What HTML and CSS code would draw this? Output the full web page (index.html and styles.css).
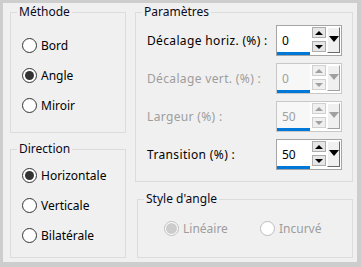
FILE: index.html
```html
<!DOCTYPE html>
<html lang="fr">
<head>
  <meta charset="UTF-8">
  <title>Angle</title>
  <link rel="stylesheet" href="styles.css">
</head>
<body>
  <div class="dialog">
    <div class="col-left">
      <div class="group methode">
        <span class="group-title">Méthode</span>
        <label class="radio-row"><span class="radio"></span>Bord</label>
        <label class="radio-row"><span class="radio checked"></span>Angle</label>
        <label class="radio-row"><span class="radio"></span>Miroir</label>
      </div>
      <div class="group direction">
        <span class="group-title">Direction</span>
        <label class="radio-row"><span class="radio checked"></span>Horizontale</label>
        <label class="radio-row"><span class="radio"></span>Verticale</label>
        <label class="radio-row"><span class="radio"></span>Bilatérale</label>
      </div>
    </div>

    <div class="col-right">
      <div class="group params">
        <span class="group-title">Paramètres</span>

        <div class="param-row">
          <span class="param-label">Décalage horiz. (%) :</span>
          <div class="spin">
            <div class="spin-field"><span>0</span></div>
            <div class="spin-btns">
              <span class="spin-btn"><span class="tri-up"></span></span>
              <span class="spin-btn"><span class="tri-down"></span></span>
            </div>
            <span class="drop-btn"><span class="tri-drop"></span></span>
          </div>
        </div>

        <div class="param-row disabled">
          <span class="param-label">Décalage vert. (%) :</span>
          <div class="spin">
            <div class="spin-field"><span>0</span></div>
            <div class="spin-btns">
              <span class="spin-btn"><span class="tri-up"></span></span>
              <span class="spin-btn"><span class="tri-down"></span></span>
            </div>
            <span class="drop-btn"><span class="tri-drop"></span></span>
          </div>
        </div>

        <div class="param-row disabled">
          <span class="param-label">Largeur (%) :</span>
          <div class="spin">
            <div class="spin-field"><span>50</span></div>
            <div class="spin-btns">
              <span class="spin-btn"><span class="tri-up"></span></span>
              <span class="spin-btn"><span class="tri-down"></span></span>
            </div>
            <span class="drop-btn"><span class="tri-drop"></span></span>
          </div>
        </div>

        <div class="param-row">
          <span class="param-label">Transition (%) :</span>
          <div class="spin">
            <div class="spin-field"><span>50</span></div>
            <div class="spin-btns">
              <span class="spin-btn"><span class="tri-up"></span></span>
              <span class="spin-btn"><span class="tri-down"></span></span>
            </div>
            <span class="drop-btn"><span class="tri-drop"></span></span>
          </div>
        </div>
      </div>

      <div class="group style-angle">
        <span class="group-title">Style d'angle</span>
        <div class="inline-radios">
          <label class="radio-row disabled first"><span class="radio checked"></span>Linéaire</label>
          <label class="radio-row disabled"><span class="radio"></span>Incurvé</label>
        </div>
      </div>
    </div>
  </div>
</body>
</html>
```

FILE: styles.css
```css
* {
  margin: 0;
  padding: 0;
  box-sizing: border-box;
  font-family: "Noto Sans", "Open Sans", sans-serif;
}

body {
  background-color: #cdcdcd;
  width: 361px;
  height: 267px;
  overflow: hidden;
  font-size: 12px;
  color: #000;
}

.dialog {
  margin: 3px 4px 5px 3px;
  height: 259px;
  background-color: #f0f0f0;
  padding: 9px 4px 4px 7px;
  display: grid;
  grid-template-columns: 116px 1fr;
  column-gap: 9px;
}

.col-left,
.col-right {
  display: flex;
  flex-direction: column;
}

/* Group boxes */
.group {
  position: relative;
  border: 1px solid #dcdcdc;
}

.group-title {
  position: absolute;
  top: -9px;
  left: 6px;
  padding: 0 2px;
  line-height: 16px;
  background-color: #f0f0f0;
  color: #0a0a1e;
}

.methode {
  height: 121px;
  padding: 17px 0 0 11px;
}

.direction {
  height: 109px;
  margin-top: 16px;
  padding: 10px 0 0 11px;
}

.params {
  height: 170px;
  padding: 12px 10px 0 11px;
  display: flex;
  flex-direction: column;
  gap: 7px;
}

.style-angle {
  height: 59px;
  margin-top: 17px;
  margin-left: 2px;
  padding: 13px 0 0 26px;
}

/* Radios */
.radio-row {
  display: flex;
  align-items: center;
  gap: 4px;
  height: 30px;
}

.radio {
  width: 15px;
  height: 15px;
  border: 1px solid #333;
  border-radius: 50%;
  background: #fff;
  display: flex;
  align-items: center;
  justify-content: center;
  flex-shrink: 0;
}

.radio.checked::after {
  content: "";
  width: 9px;
  height: 9px;
  border-radius: 50%;
  background: #333;
}

.inline-radios {
  display: flex;
}

.inline-radios .first {
  width: 96px;
}

.radio-row.disabled {
  color: #9d9d9d;
}

.radio-row.disabled .radio {
  border-color: #bcbcbc;
}

.radio-row.disabled .radio.checked::after {
  width: 11px;
  height: 11px;
  background: #cccccc;
}

/* Parameter rows */
.param-row {
  display: flex;
  align-items: center;
  justify-content: space-between;
  height: 31px;
}

.param-label {
  letter-spacing: 0.35px;
}

.param-row.disabled .param-label {
  color: #9d9d9d;
}

.spin {
  width: 66px;
  height: 31px;
  border: 1px solid #a5a5a5;
  background: #fff;
  display: flex;
  align-items: flex-start;
}

.spin-field {
  width: 33px;
  height: 100%;
  display: flex;
  align-items: center;
  padding: 0 0 0 5px;
  border-bottom: 3px solid #0078d7;
  border-top: 2px solid #fff;
  margin-bottom: 1px;
}

.spin-field span {
  margin-top: 1px;
}

.spin-btns {
  display: flex;
  flex-direction: column;
  gap: 3px;
  margin: 1px 0 0 2px;
}

.spin-btn {
  width: 14px;
  height: 11px;
  background: #e6e6e6;
  border: 1px solid #adadad;
  display: flex;
  align-items: center;
  justify-content: center;
}

.tri-up {
  width: 0;
  height: 0;
  border-left: 4px solid transparent;
  border-right: 4px solid transparent;
  border-bottom: 4px solid #000;
}

.tri-down {
  width: 0;
  height: 0;
  border-left: 4px solid transparent;
  border-right: 4px solid transparent;
  border-top: 4px solid #000;
}

.drop-btn {
  width: 13px;
  height: 26px;
  margin: 1px 0 0 1px;
  background: #f0f0f0;
  border: 1px solid;
  border-color: #ffffff #696969 #696969 #ffffff;
  display: flex;
  justify-content: center;
  padding-top: 8px;
}

.tri-drop {
  width: 0;
  height: 0;
  border-left: 5px solid transparent;
  border-right: 5px solid transparent;
  border-top: 6px solid #000;
}

.param-row.disabled .spin {
  border-color: #c8c8c8;
}

.param-row.disabled .spin-field {
  color: #a0a0a0;
  background: #f7f7f7;
  border-top-color: #f7f7f7;
}

.param-row.disabled .spin-btn {
  background: #f0f0f0;
  border-color: #d0d0d0;
}

.param-row.disabled .tri-up {
  border-bottom-color: #a0a0a0;
}

.param-row.disabled .tri-down,
.param-row.disabled .tri-drop {
  border-top-color: #a0a0a0;
}

.param-row.disabled .drop-btn {
  border-color: #ffffff #a0a0a0 #a0a0a0 #ffffff;
}
```
